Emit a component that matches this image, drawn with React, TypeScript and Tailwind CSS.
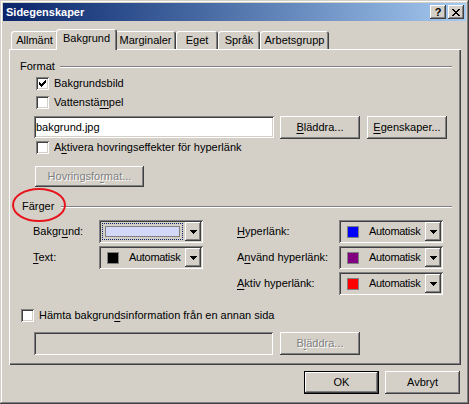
import React from 'react'

const raised =
  'shadow-[inset_-1px_-1px_0_#404040,inset_1px_1px_0_#ffffff,inset_-2px_-2px_0_#808080,inset_2px_2px_0_#d4d0c8]'
const sunken =
  'shadow-[inset_1px_1px_0_#808080,inset_-1px_-1px_0_#ffffff,inset_2px_2px_0_#404040,inset_-2px_-2px_0_#d4d0c8]'
const disabledText = 'text-[#808080] [text-shadow:1px_1px_0_#ffffff]'

const U = ({ children }: { children: React.ReactNode }) => (
  <span className="underline underline-offset-[2px]">{children}</span>
)

const CheckMark = () => {
  // classic 7x7 windows check
  const rows: [number, number, number][] = [
    [0, 6, 1],
    [1, 5, 2],
    [2, 0, 1],
    [2, 4, 3],
    [3, 0, 2],
    [3, 3, 3],
    [4, 0, 5],
    [5, 1, 3],
    [6, 2, 1],
  ]
  return (
    <svg width="7" height="7" viewBox="0 0 7 7" shapeRendering="crispEdges">
      {rows.map(([y, x, w], i) => (
        <rect key={i} x={x} y={y} width={w} height={1} fill="#000" />
      ))}
    </svg>
  )
}

const Checkbox = ({ checked }: { checked?: boolean }) => (
  <span className={`flex h-[13px] w-[13px] shrink-0 items-center justify-center bg-white ${sunken}`}>
    {checked && <CheckMark />}
  </span>
)

const Arrow = () => (
  <svg width="7" height="4" viewBox="0 0 7 4" shapeRendering="crispEdges">
    <rect x="0" y="0" width="7" height="1" fill="#000" />
    <rect x="1" y="1" width="5" height="1" fill="#000" />
    <rect x="2" y="2" width="3" height="1" fill="#000" />
    <rect x="3" y="3" width="1" height="1" fill="#000" />
  </svg>
)

interface ButtonProps {
  children: React.ReactNode
  className?: string
  disabled?: boolean
  isDefault?: boolean
}

const Button = ({ children, className = '', disabled, isDefault }: ButtonProps) => {
  if (isDefault) {
    return (
      <div className={`border border-black ${className}`}>
        <div className={`flex h-full w-full items-center justify-center bg-[#d4d0c8] ${raised}`}>
          {children}
        </div>
      </div>
    )
  }
  return (
    <div
      className={`flex items-center justify-center bg-[#d4d0c8] ${raised} ${
        disabled ? disabledText : 'text-black'
      } ${className}`}
    >
      {children}
    </div>
  )
}

interface ComboProps {
  color?: string
  focused?: boolean
}

const ColorCombo = ({ color, focused }: ComboProps) => (
  <div className={`flex h-[23px] w-[104px] items-stretch bg-[#d4d0c8] p-[2px] ${sunken}`}>
    {focused ? (
      <div className="flex flex-1 items-stretch py-px pl-px pr-[2px]">
        <div className="flex flex-1 border border-dotted border-[#0a246a] p-[2px]">
          <div className="flex-1 border border-[#808080] bg-[#d4d8f8]" />
        </div>
      </div>
    ) : (
      <div className="flex flex-1 items-center overflow-hidden pl-[6px]">
        <span className={`h-[12px] w-[12px] shrink-0 border border-[#808080] ${color}`} />
        <span className="ml-[10px] tracking-[-0.3px]">Automatisk</span>
      </div>
    )}
    <div className={`flex w-[16px] shrink-0 items-center justify-center ${raised}`}>
      <Arrow />
    </div>
  </div>
)

const tabs = [
  { label: 'Allmänt', w: 'w-[47px]' },
  { label: 'Bakgrund', w: 'w-[61px]', active: true },
  { label: 'Marginaler', w: 'w-[61px]' },
  { label: 'Eget', w: 'w-[42px]' },
  { label: 'Språk', w: 'w-[42px]' },
  { label: 'Arbetsgrupp', w: 'w-[69px]' },
]

const tabShadow =
  'shadow-[inset_1px_1px_0_#ffffff,inset_-1px_0_0_#404040,inset_-2px_0_0_#808080]'

export default function App() {
  return (
    <div className="min-h-screen bg-white">
      <div
        className={`flex h-[404px] w-[469px] flex-col bg-[#d4d0c8] p-[3px] font-['Liberation_Sans',Arial,sans-serif] text-[11px] leading-[13px] text-black shadow-[inset_-1px_-1px_0_#404040,inset_1px_1px_0_#d4d0c8,inset_-2px_-2px_0_#808080,inset_2px_2px_0_#ffffff]`}
      >
        {/* Title bar */}
        <div className="flex h-[18px] items-center bg-linear-to-r from-[#0a246a] to-[#a6caf0] pl-[3px] pr-[2px]">
          <span className="flex-1 font-bold text-white">Sidegenskaper</span>
          <div className={`flex h-[14px] w-[16px] items-center justify-center bg-[#d4d0c8] text-[11px] leading-none font-bold ${raised}`}>
            ?
          </div>
          <div className={`ml-[2px] flex h-[14px] w-[16px] items-center justify-center bg-[#d4d0c8] ${raised}`}>
            <svg width="8" height="7" viewBox="0 0 8 7" shapeRendering="crispEdges">
              <path d="M0 0h2v1H0zM6 0h2v1H6zM1 1h2v1H1zM5 1h2v1H5zM2 2h4v1H2zM3 3h2v1H3zM2 4h4v1H2zM1 5h2v1H1zM5 5h2v1H5zM0 6h2v1H0zM6 6h2v1H6z" fill="#000" />
            </svg>
          </div>
        </div>

        <div className="flex flex-1 flex-col pt-[8px] pl-[6px] pr-[5px]">
          {/* Tabs */}
          <div className="flex h-[20px] items-end pl-[2px]">
            {tabs.map((t) =>
              t.active ? (
                <div
                  key={t.label}
                  className={`relative z-10 -mx-[2px] -mb-px flex h-[21px] ${t.w} shrink-0 justify-center rounded-t-[3px] bg-[#d4d0c8] pt-[3px] ${tabShadow}`}
                >
                  {t.label}
                </div>
              ) : (
                <div
                  key={t.label}
                  className={`flex h-[18px] ${t.w} shrink-0 justify-center rounded-t-[3px] bg-[#d4d0c8] pt-[3px] ${tabShadow}`}
                >
                  {t.label}
                </div>
              )
            )}
          </div>

          {/* Tab page */}
          <div className="relative h-[316px] bg-[#d4d0c8] pt-[11px] pr-[9px] shadow-[inset_1px_1px_0_#ffffff,inset_-1px_-1px_0_#404040,inset_-2px_-2px_0_#808080]">
            {/* Format */}
            <div className="flex items-center pl-[11px]">
              <span className="w-[40px]">Format</span>
              <div className="h-[2px] flex-1 border-t border-b border-t-[#808080] border-b-white" />
            </div>

            <div className="mt-[4px] flex flex-col gap-[6px] pl-[27px]">
              <div className="flex h-[13px] items-center gap-[5px]">
                <Checkbox checked />
                <span>Bakgrundsbild</span>
              </div>
              <div className="flex h-[13px] items-center gap-[5px]">
                <Checkbox />
                <span>
                  Vattenstä<U>m</U>pel
                </span>
              </div>
            </div>

            <div className="mt-[7px] flex items-start pl-[25px]">
              <div className={`flex h-[22px] w-[240px] items-center bg-white pl-[2px] ${sunken}`}>bakgrund.jpg</div>
              <Button className="ml-[6px] h-[23px] w-[80px]">
                <span>
                  <U>B</U>läddra...
                </span>
              </Button>
              <Button className="ml-[7px] h-[23px] w-[80px]">
                <span>
                  <U>E</U>genskaper...
                </span>
              </Button>
            </div>

            <div className="mt-[2px] flex h-[13px] items-center gap-[5px] pl-[27px]">
              <Checkbox />
              <span>
                A<U>k</U>tivera hovringseffekter för hyperlänk
              </span>
            </div>

            <div className="mt-[12px] pl-[26px]">
              <Button disabled className="h-[21px] w-[109px]">
                <span>
                  Hovringsfo<U>r</U>mat...
                </span>
              </Button>
            </div>

            {/* Färger */}
            <div className="mt-[13px] flex items-center pl-[13px]">
              <span className="w-[39px]">Färger</span>
              <div className="h-[2px] flex-1 border-t border-b border-t-[#808080] border-b-white" />
            </div>

            <div className="mt-[7px] grid grid-cols-[66px_104px_34px_102px_104px] auto-rows-[23px] gap-y-[3px] pl-[24px]">
              <span className="self-center">
                Bakgr<U>u</U>nd:
              </span>
              <ColorCombo focused />
              <span />
              <span className="self-center">
                <U>H</U>yperlänk:
              </span>
              <ColorCombo color="bg-[#0000ff]" />

              <span className="self-center">
                <U>T</U>ext:
              </span>
              <ColorCombo color="bg-black" />
              <span />
              <span className="self-center">
                A<U>n</U>vänd hyperlänk:
              </span>
              <ColorCombo color="bg-[#800080]" />

              <span />
              <span />
              <span />
              <span className="self-center">
                <U>A</U>ktiv hyperlänk:
              </span>
              <ColorCombo color="bg-[#ff0000]" />
            </div>

            <div className="mt-[14px] flex h-[13px] items-center gap-[5px] pl-[12px]">
              <Checkbox />
              <span>
                Hämta bakgrun<U>d</U>sinformation från en annan sida
              </span>
            </div>

            <div className="mt-[10px] flex items-start pl-[25px]">
              <div className={`h-[23px] w-[239px] bg-[#d4d0c8] ${sunken}`} />
              <Button disabled className="ml-[7px] h-[23px] w-[80px]">
                <span>
                  B<U>l</U>äddra...
                </span>
              </Button>
            </div>

            {/* annotation ellipse */}
            <svg className="absolute left-[3px] top-[139px]" width="54" height="34" viewBox="0 0 54 34">
              <ellipse cx="27" cy="17" rx="26" ry="16" fill="none" stroke="#e8141c" strokeWidth="2" />
            </svg>
          </div>

          {/* Buttons */}
          <div className="mt-[6px] mr-px flex justify-end gap-[6px]">
            <Button isDefault className="h-[23px] w-[75px]">
              OK
            </Button>
            <Button className="h-[23px] w-[75px]">Avbryt</Button>
          </div>
        </div>
      </div>
    </div>
  )
}
